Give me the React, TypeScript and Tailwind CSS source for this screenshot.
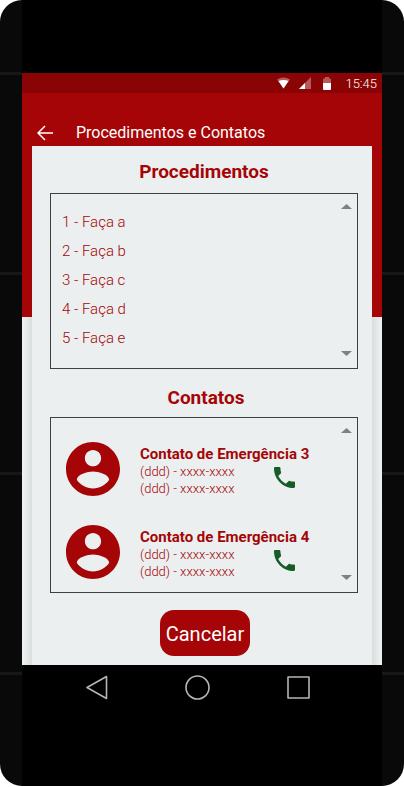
import React from "react";

const steps = ["1 - Faça a", "2 - Faça b", "3 - Faça c", "4 - Faça d", "5 - Faça e"];

const contacts = [
  { name: "Contato de Emergência 3", phones: ["(ddd) - xxxx-xxxx", "(ddd) - xxxx-xxxx"] },
  { name: "Contato de Emergência 4", phones: ["(ddd) - xxxx-xxxx", "(ddd) - xxxx-xxxx"] },
];

function StatusBar() {
  return (
    <div className="flex h-5 items-center justify-end bg-[#8b0405] pr-[5px] text-white">
      <svg className="h-3 w-[13px]" viewBox="0 0 13 12" fill="currentColor" aria-hidden="true">
        <path d="M0 2.6Q6.500-1.600 13 2.600L6.500 11.500Z" opacity=".35" />
        <path d="M1.500 4Q6.500 2 11.500 4L6.500 11.500Z" />
      </svg>
      <svg className="ml-[9px] h-3 w-3" viewBox="0 0 12 12" fill="currentColor" aria-hidden="true">
        <path d="M0 12L12 0V12Z" opacity=".35" />
        <path d="M0 12L6 6V12Z" />
      </svg>
      <svg className="ml-3 h-[13px] w-2" viewBox="0 0 8 13" fill="currentColor" aria-hidden="true">
        <path d="M0 6V2.500Q0 1.500 1 1.500H2V0H6V1.500H7Q8 1.500 8 2.500V6Z" opacity=".35" />
        <path d="M0 6H8V12Q8 13 7 13H1Q0 13 0 12Z" />
      </svg>
      <span className="ml-[14px] pt-0.5 text-[13px] leading-5 font-light">15:45</span>
    </div>
  );
}

function Panel({ label, children }: { label: string; children: React.ReactNode }) {
  return (
    <div className="flex min-h-44 justify-between border border-[#3c4043] pr-[5px]">
      {children}
      <div className="flex shrink-0 flex-col justify-between pt-[10px] pb-3 text-[#808080]">
        <button type="button" aria-label={`Rolar ${label} para cima`}>
          <svg className="block h-[5px] w-[11px]" viewBox="0 0 11 5" fill="currentColor">
            <path d="M0 5L5.500 0L11 5Z" />
          </svg>
        </button>
        <button type="button" aria-label={`Rolar ${label} para baixo`}>
          <svg className="block h-[5px] w-[11px]" viewBox="0 0 11 5" fill="currentColor">
            <path d="M0 0L5.500 5L11 0Z" />
          </svg>
        </button>
      </div>
    </div>
  );
}

export default function App() {
  return (
    <div className="flex min-h-screen bg-white pb-px font-[Roboto,'Liberation_Sans',sans-serif]">
      <div className="flex w-full overflow-hidden rounded-[22px] bg-[#090909] bg-[linear-gradient(#171717,#171717_3px,transparent_3px)] bg-[length:100%_200px] bg-[position:0_72px] px-[22px]">
        <div className="flex w-full flex-col bg-black pt-[73px]">
          <StatusBar />
          <div className="bg-[linear-gradient(#a50506,#a50506),linear-gradient(to_right,#f0f3f3,#d9dddd_10px,#d9dddd_calc(100%-10px),#f0f3f3)] bg-[length:100%_224px,100%_100%] bg-no-repeat px-[10px]">
            <header className="flex items-end pt-7 pb-px text-white">
              <button type="button" aria-label="Voltar" className="ml-[5px] flex h-6 w-4 items-center">
                <svg className="h-4 w-4" viewBox="0 0 16 16" fill="none" stroke="currentColor" strokeWidth="1.5">
                  <path d="M16 8H1M8 1L1 8L8 15" />
                </svg>
              </button>
              <h1 className="ml-[23px] text-base leading-6">Procedimentos e Contatos</h1>
            </header>

            <main className="bg-[#ebeff0] pt-3 pr-[14px] pb-[9px] pl-[18px] text-[#a50506]">
              <h2 className="pb-[7px] text-center text-[19px] leading-7 font-bold">Procedimentos</h2>
              <Panel label="procedimentos">
                <ul className="pt-[14px] pl-[11px] text-[15px] leading-[29px] font-light">
                  {steps.map((step) => (
                    <li key={step}>{step}</li>
                  ))}
                </ul>
              </Panel>

              <h2 className="pt-[15px] pb-[5px] pl-1 text-center text-[19px] leading-7 font-bold">Contatos</h2>
              <Panel label="contatos">
                <ul className="flex flex-col gap-7 pt-6 pl-[15px]">
                  {contacts.map((contact) => (
                    <li key={contact.name} className="flex gap-5">
                      <svg className="h-[54px] w-[54px] shrink-0" viewBox="2 2 20 20" fill="currentColor" aria-hidden="true">
                        <path d="M12 2C6.480 2 2 6.480 2 12s4.480 10 10 10 10-4.480 10-10S17.520 2 12 2zm0 3c1.660 0 3 1.340 3 3s-1.340 3-3 3-3-1.340-3-3 1.340-3 3-3zm0 14.200c-2.500 0-4.710-1.280-6-3.220.03-1.990 4-3.080 6-3.080 1.990 0 5.970 1.090 6 3.080-1.290 1.940-3.500 3.220-6 3.220z" />
                      </svg>
                      <div className="pt-[3px]">
                        <h3 className="text-[15px] leading-[18px] font-bold">{contact.name}</h3>
                        <div className="flex">
                          <div className="w-[134px] text-[13px] leading-[17px] font-light">
                            {contact.phones.map((phone, i) => (
                              <p key={i}>{phone}</p>
                            ))}
                          </div>
                          <button type="button" aria-label={`Ligar para ${contact.name}`} className="mt-1 h-[21px] w-[21px] text-[#155c27]">
                            <svg className="h-full w-full" viewBox="3 3 18 18" fill="currentColor">
                              <path d="M6.620 10.790c1.440 2.830 3.760 5.140 6.590 6.590l2.200-2.200c.27-.27.67-.36 1.020-.24 1.120.37 2.330.57 3.570.57.55 0 1 .45 1 1V20c0 .55-.45 1-1 1-9.390 0-17-7.610-17-17 0-.55.45-1 1-1h3.500c.55 0 1 .45 1 1 0 1.250.2 2.450.57 3.570.11.35.03.74-.25 1.020l-2.200 2.200z" />
                            </svg>
                          </button>
                        </div>
                      </div>
                    </li>
                  ))}
                </ul>
              </Panel>

              <div className="flex justify-center pt-[17px] pl-0.5">
                <button type="button" className="h-[46px] w-[90px] rounded-[14px] bg-[#a50506] pt-0.5 text-xl text-white">
                  Cancelar
                </button>
              </div>
            </main>
          </div>

          <nav aria-label="Navegação do sistema" className="flex items-center justify-between pt-[10px] pr-[72px] pl-16 text-[#b5b5b5]">
            <button type="button" aria-label="Voltar à tela anterior">
              <svg className="block h-[25px] w-[22px]" viewBox="0 0 22 25" fill="none" stroke="currentColor" strokeWidth="1.600" strokeLinejoin="round">
                <path d="M20.500 1.500V23.500L1 12.500Z" />
              </svg>
            </button>
            <button type="button" aria-label="Início">
              <svg className="block h-[25px] w-[25px]" viewBox="0 0 25 25" fill="none" stroke="currentColor" strokeWidth="1.600">
                <circle cx="12.500" cy="12.500" r="11.500" />
              </svg>
            </button>
            <button type="button" aria-label="Aplicativos recentes">
              <svg className="block h-[23px] w-[23px]" viewBox="0 0 23 23" fill="none" stroke="currentColor" strokeWidth="1.600" strokeLinejoin="round">
                <rect x="1" y="1" width="21" height="21" />
              </svg>
            </button>
          </nav>
        </div>
      </div>
    </div>
  );
}
